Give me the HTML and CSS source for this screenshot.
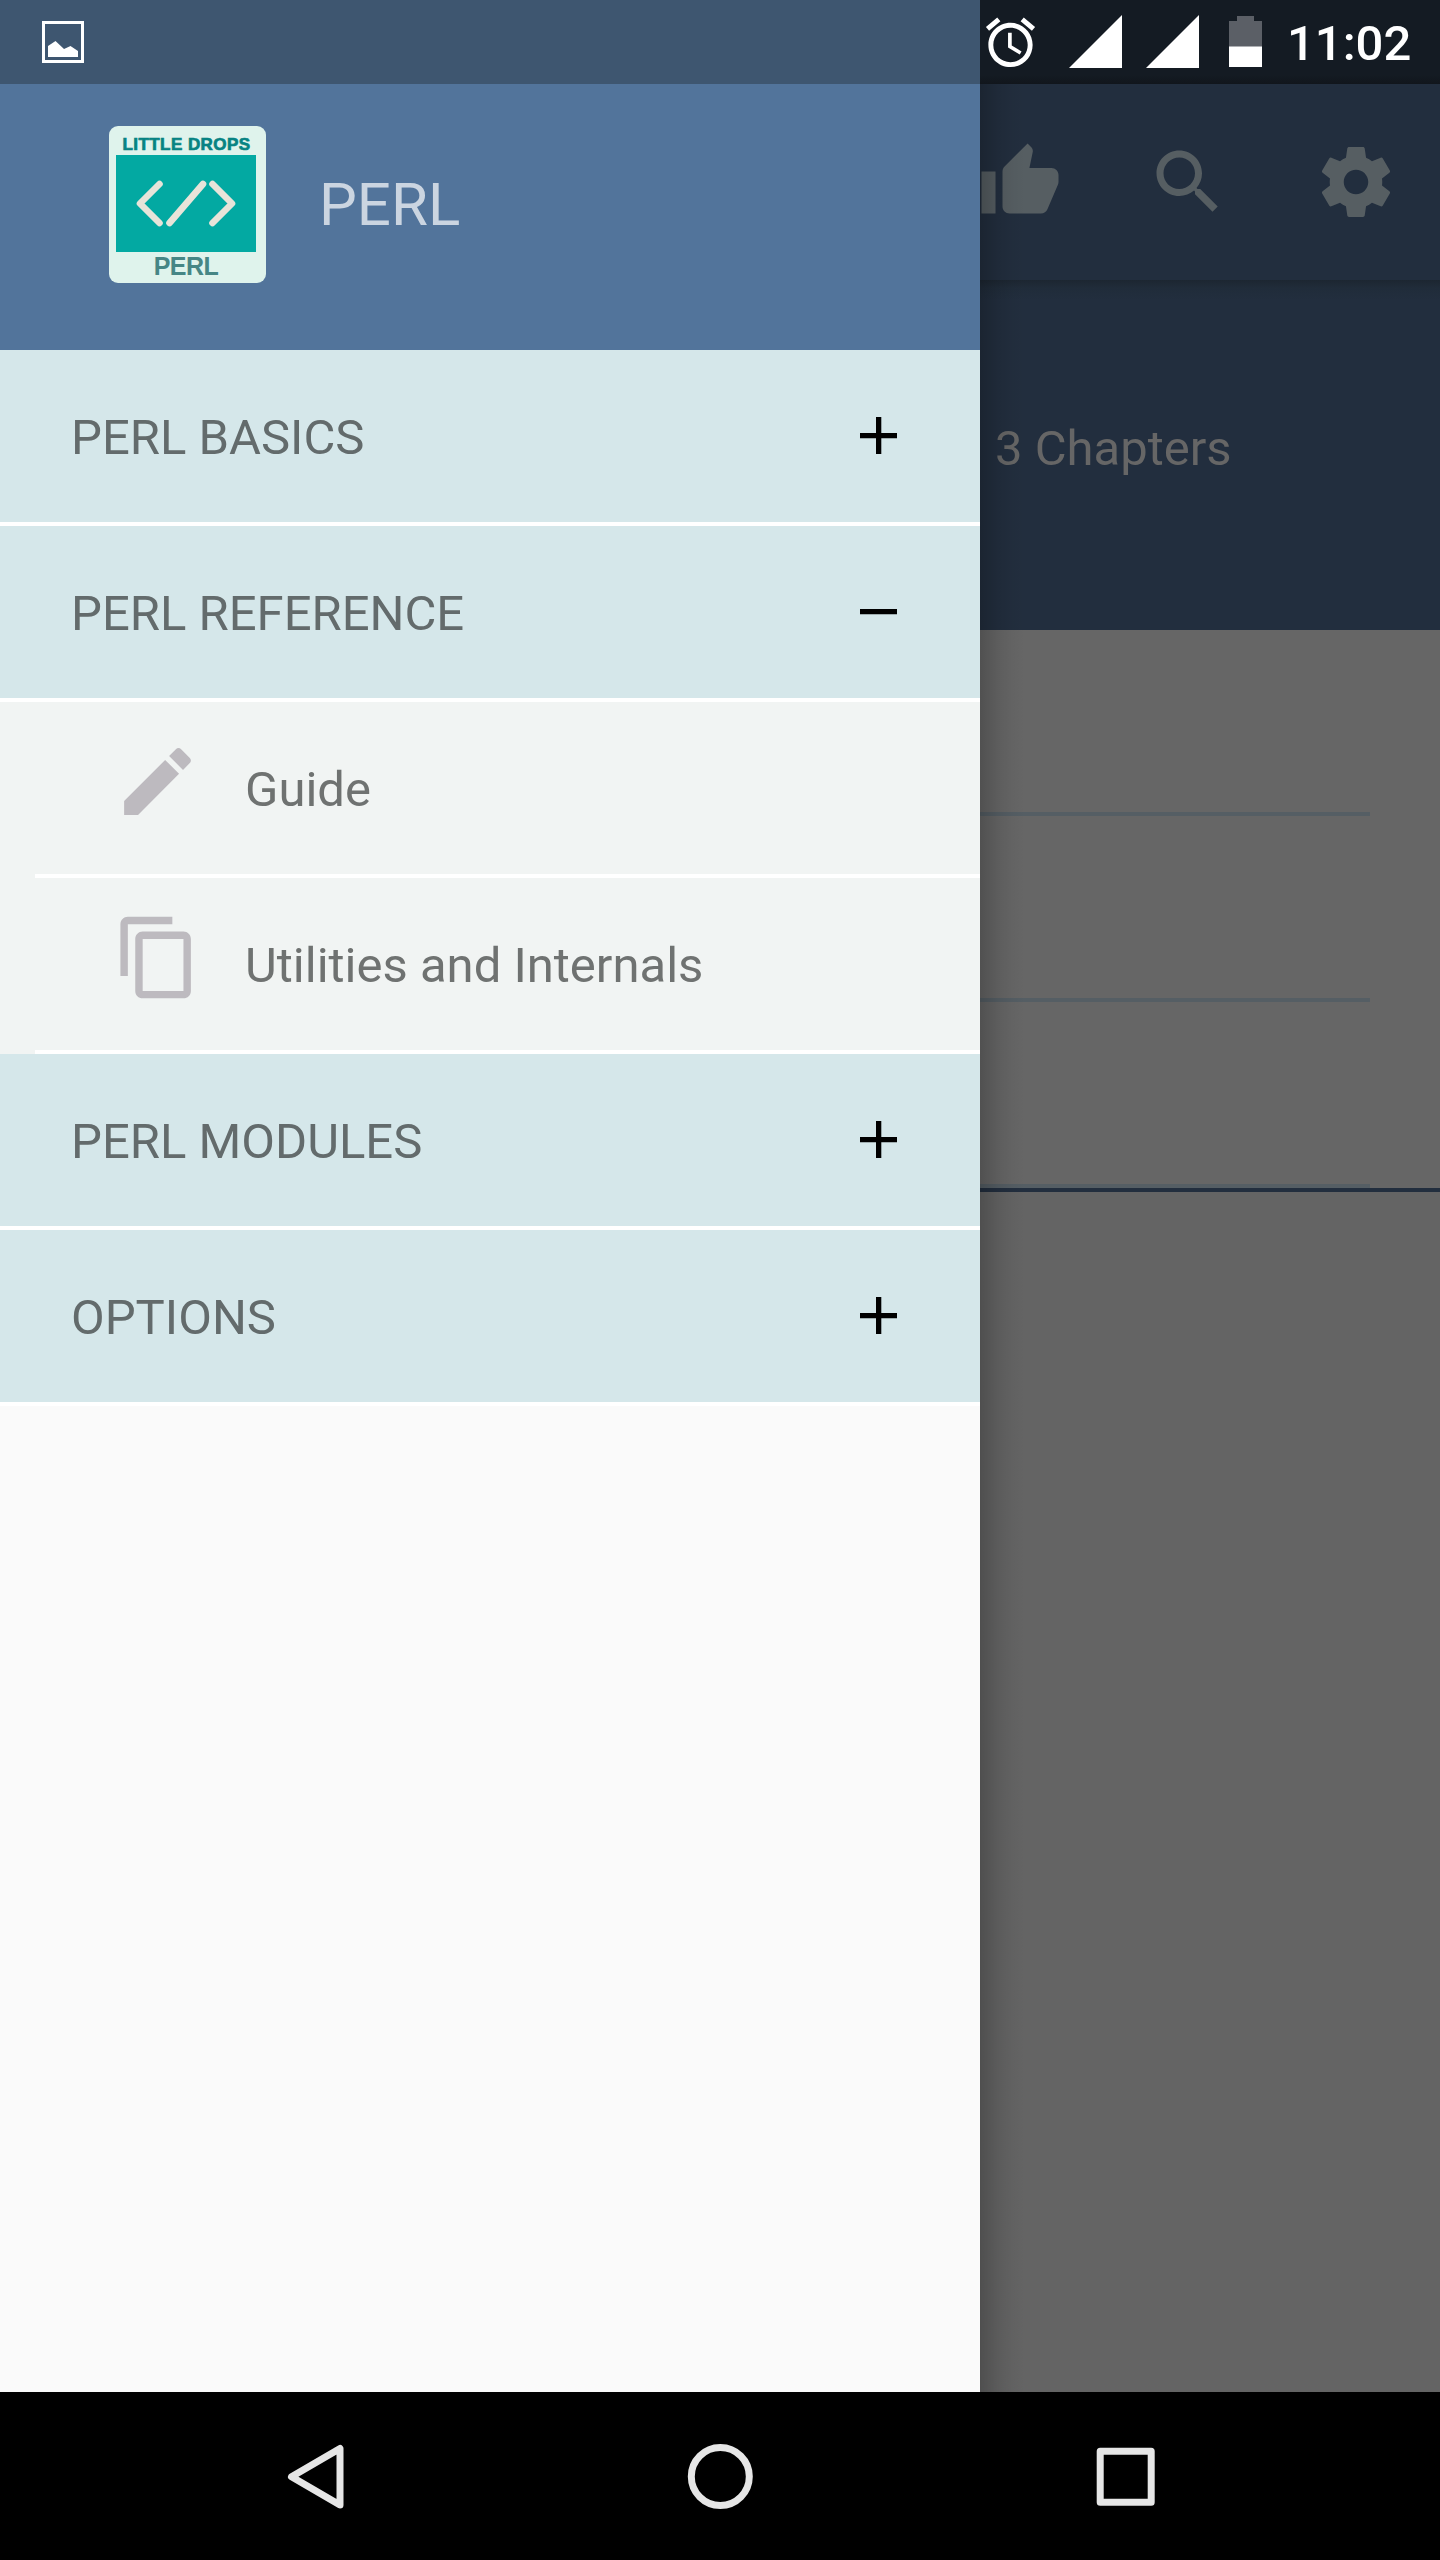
FILE: index.html
```
<!DOCTYPE html>
<html lang="en">
<head>
    <meta charset="UTF-8">
    <meta name="viewport" content="width=device-width, initial-scale=1.0">
    <title>PERL</title>
    <link rel="stylesheet" href="styles.css">
</head>
<body>
    <header class="status-bar">
        <div class="status-left">
            <svg class="picture-icon" viewBox="0 0 42 42">
                <rect x="1.5" y="1.5" width="39" height="39" fill="none" stroke="#fff" stroke-width="3"/>
                <path d="M6 36V25l7.5-5L22 28l6.500-3L36 30v6z" fill="#fff"/>
            </svg>
        </div>
        <div class="status-right">
            <svg class="alarm-icon" viewBox="0 0 24 24" fill="#fff">
                <path d="M22 5.720l-4.600-3.860-1.290 1.530 4.600 3.860L22 5.720zM7.880 3.390L6.600 1.860 2 5.710l1.290 1.530 4.590-3.850zM12.500 8H11v6l4.750 2.850.75-1.230-4-2.370V8zM12 4c-4.970 0-9 4.030-9 9s4.020 9 9 9c4.970 0 9-4.030 9-9s-4.030-9-9-9zm0 16c-3.870 0-7-3.130-7-7s3.130-7 7-7 7 3.130 7 7-3.130 7-7 7z"/>
            </svg>
            <svg class="signal-icon" viewBox="0 0 53 53"><path d="M53 0v53H0z" fill="#fff"/></svg>
            <svg class="signal-icon" viewBox="0 0 53 53"><path d="M53 0v53H0z" fill="#fff"/></svg>
            <svg class="battery-icon" viewBox="0 0 33 51">
                <path d="M8 0h17v5h8v26H0V5h8z" fill="#5b5f66"/>
                <path d="M0 30.500h33V51H0z" fill="#fff"/>
            </svg>
            <span class="clock">11:02</span>
        </div>
    </header>

    <div class="screen">
        <nav class="drawer">
            <div class="drawer-header">
                <div class="logo">
                    <span class="logo-top">LITTLE DROPS</span>
                    <svg class="logo-code" viewBox="0 0 140 97" fill="none" stroke="#e8e4d9" stroke-width="6.600" stroke-linecap="round" stroke-linejoin="round">
                        <path d="M43.500 29L24 48.500 43.500 68M53.500 68L87 29M96.500 29L116 48.500 96.500 68"/>
                    </svg>
                    <span class="logo-bottom">PERL</span>
                </div>
                <h1>PERL</h1>
            </div>

            <div class="group">
                <span>PERL BASICS</span>
                <svg class="toggle" viewBox="0 0 37 37"><path d="M0 16h37v5.300H0zM16 0h5.300v37H16z"/></svg>
            </div>
            <div class="group">
                <span>PERL REFERENCE</span>
                <svg class="toggle" viewBox="0 0 37 37"><path d="M0 16h37v5.300H0z"/></svg>
            </div>
            <ul class="items">
                <li>
                    <svg class="item-icon" viewBox="0 0 24 24"><path d="M3 17.250V21h3.750L17.810 9.940l-3.750-3.750L3 17.250zM20.710 7.040c.39-.39.39-1.020 0-1.410l-2.340-2.340c-.39-.39-1.020-.39-1.410 0l-1.830 1.830 3.750 3.750 1.830-1.830z"/></svg>
                    <span>Guide</span>
                </li>
                <li>
                    <svg class="item-icon" viewBox="0 0 24 24"><path d="M16 1H4c-1.100 0-2 .9-2 2v14h2V3h12V1zm3 4H8c-1.100 0-2 .9-2 2v14c0 1.100.9 2 2 2h11c1.100 0 2-.9 2-2V7c0-1.100-.9-2-2-2zm0 16H8V7h11v14z"/></svg>
                    <span>Utilities and Internals</span>
                </li>
            </ul>
            <div class="group">
                <span>PERL MODULES</span>
                <svg class="toggle" viewBox="0 0 37 37"><path d="M0 16h37v5.300H0zM16 0h5.300v37H16z"/></svg>
            </div>
            <div class="group">
                <span>OPTIONS</span>
                <svg class="toggle" viewBox="0 0 37 37"><path d="M0 16h37v5.300H0zM16 0h5.300v37H16z"/></svg>
            </div>
        </nav>

        <main class="page">
            <div class="app-bar">
                <svg viewBox="0 0 24 24"><path d="M1 21h4V9H1v12zm22-11c0-1.100-.9-2-2-2h-6.310l.95-4.570.03-.32c0-.41-.17-.79-.44-1.060L14.170 1 7.590 7.590C7.220 7.950 7 8.450 7 9v10c0 1.100.9 2 2 2h9c.83 0 1.540-.5 1.840-1.220l3.020-7.050c.09-.23.14-.47.14-.73v-2z"/></svg>
                <svg viewBox="0 0 24 24"><path d="M15.500 14h-.79l-.28-.27C15.410 12.590 16 11.110 16 9.500 16 5.910 13.090 3 9.500 3S3 5.910 3 9.500 5.910 16 9.500 16c1.610 0 3.090-.59 4.230-1.570l.27.28v.79l5 4.990L20.490 19l-4.990-5zm-6 0C7.010 14 5 11.990 5 9.500S7.010 5 9.500 5 14 7.010 14 9.500 11.990 14 9.500 14z"/></svg>
                <svg viewBox="0 0 24 24"><path d="M19.430 12.980c.04-.32.07-.64.07-.98s-.03-.66-.07-.98l2.110-1.650c.19-.15.24-.42.12-.64l-2-3.460c-.12-.22-.39-.3-.61-.22l-2.490 1c-.52-.4-1.080-.73-1.690-.98l-.38-2.650C14.460 2.180 14.250 2 14 2h-4c-.25 0-.46.18-.49.42l-.38 2.650c-.61.25-1.170.59-1.690.98l-2.490-1c-.23-.09-.49 0-.61.22l-2 3.460c-.13.22-.07.49.12.64l2.110 1.650c-.04.32-.07.65-.07.98s.03.66.07.98l-2.110 1.650c-.19.15-.24.42-.12.64l2 3.460c.12.22.39.3.61.22l2.490-1c.52.4 1.080.73 1.690.98l.38 2.650c.03.24.24.42.49.42h4c.25 0 .46-.18.49-.42l.38-2.650c.61-.25 1.170-.59 1.690-.98l2.490 1c.23.09.49 0 .61-.22l2-3.460c.12-.22.07-.49-.12-.64l-2.110-1.650zM12 15.500c-1.930 0-3.500-1.570-3.500-3.500s1.570-3.500 3.500-3.500 3.500 1.570 3.500 3.500-1.570 3.500-3.500 3.500z"/></svg>
            </div>
            <div class="hero">3 Chapters</div>
            <div class="chapters">
                <div class="chapter"></div>
                <div class="chapter"></div>
                <div class="chapter"></div>
            </div>
        </main>
    </div>

    <footer class="nav-bar">
        <svg viewBox="0 0 66 66"><path d="M58 5.500v56.500L9.500 33.700z"/></svg>
        <svg viewBox="0 0 66 66"><circle cx="33.300" cy="33.500" r="29"/></svg>
        <svg viewBox="0 0 66 66"><rect x="8.200" y="8.200" width="51" height="51"/></svg>
    </footer>
</body>
</html>
```
FILE: styles.css
```
* {
    box-sizing: border-box;
}
body {
    margin: 0;
    width: 1440px;
    height: 2560px;
    display: flex;
    flex-direction: column;
    overflow: hidden;
    font-family: Roboto, sans-serif;
    font-size: 49px;
    background-color: #000;
}
svg {
    display: block;
    flex: none;
}

/* status bar */
.status-bar {
    display: flex;
    height: 84px;
}
.status-left {
    width: 980px;
    padding: 21px 42px;
    background-color: #3e5670;
}
.picture-icon {
    width: 42px;
    height: 42px;
}
.status-right {
    flex: 1;
    display: flex;
    align-items: flex-start;
    background: linear-gradient(#141b23 75px, #11161c);
}
.alarm-icon {
    width: 59px;
    height: 59px;
    margin: 13px 0 0 1px;
}
.signal-icon {
    width: 53px;
    height: 53px;
    margin: 15px 0 0 29px;
}
.signal-icon + .signal-icon {
    margin-left: 24px;
}
.battery-icon {
    width: 33px;
    height: 51px;
    margin: 16px 0 0 30px;
}
.clock {
    margin: 15px 0 0 25px;
    font-size: 49px;
    font-weight: 500;
    line-height: 58px;
    color: #fff;
}

.screen {
    flex: 1;
    display: flex;
    min-height: 0;
}

/* drawer */
.drawer {
    width: 980px;
    background-color: #fafafa;
}
.drawer-header {
    height: 266px;
    display: flex;
    align-items: flex-start;
    padding: 42px 0 0 109px;
    background-color: #52749b;
}
.logo {
    width: 157px;
    height: 157px;
    display: flex;
    flex-direction: column;
    align-items: center;
    border-radius: 9px;
    background-color: #dff3ec;
    font-family: "Liberation Sans", Arial, sans-serif;
    font-weight: bold;
    white-space: nowrap;
}
.logo-top {
    height: 29px;
    padding-top: 9px;
    margin-right: 2px;
    font-size: 17px;
    line-height: 19px;
    letter-spacing: 0.45px;
    color: #078383;
    -webkit-text-stroke: 0.7px #078383;
}
.logo-code {
    width: 140px;
    height: 97px;
    margin-right: 3px;
    background-color: #03a9a2;
}
.logo-bottom {
    margin-right: 3px;
    font-size: 25px;
    line-height: 28px;
    letter-spacing: -0.5px;
    color: #468685;
}
.drawer-header h1 {
    margin: 43px 0 0 53px;
    font-size: 60px;
    font-weight: 400;
    line-height: 72px;
    color: #cbd5e1;
}
.group {
    height: 176px;
    display: flex;
    justify-content: space-between;
    align-items: center;
    padding: 0 83px 0 71px;
    border-bottom: 4px solid #fff;
    background-color: #d5e7ea;
    color: #636b6c;
}
.group span,
.items span {
    padding-top: 3px;
}
.toggle {
    width: 37px;
    height: 37px;
    margin-bottom: 2px;
}
.items {
    margin: 0;
    padding: 0 0 0 35px;
    list-style: none;
    background-color: #f1f4f3;
    color: #6f7271;
}
.items li {
    height: 176px;
    display: flex;
    align-items: center;
    padding-left: 78px;
    border-bottom: 4px solid #fff;
}
.item-icon {
    width: 89px;
    height: 89px;
    margin: 0 43px 14px 0;
    fill: #bdbabf;
}

/* page behind the drawer */
.page {
    position: relative;
    flex: 1;
    background-color: #646464;
}
.page::after {
    content: "";
    position: absolute;
    top: 0;
    left: 0;
    bottom: 0;
    width: 45px;
    background: linear-gradient(to right, rgba(0, 0, 0, 0.21), rgba(0, 0, 0, 0.09) 18px, rgba(0, 0, 0, 0.03) 32px, transparent);
}
.app-bar {
    height: 196px;
    display: flex;
    gap: 84px;
    padding-top: 56px;
    background-color: #222e3e;
}
.app-bar svg {
    width: 84px;
    height: 84px;
    fill: #565e62;
}
.app-bar svg:first-child {
    margin-left: -2px;
}
.hero {
    height: 350px;
    padding: 139px 0 0 15px;
    line-height: 59px;
    color: #666;
    background: linear-gradient(#1c2631, #202c3a 8px, #222e3e 20px);
}
.chapters {
    border-bottom: 4px solid #222e3e;
    background-color: #666;
}
.chapter {
    height: 186px;
    margin-right: 70px;
    border-bottom: 4px solid #555e64;
}

/* navigation bar */
.nav-bar {
    height: 168px;
    display: flex;
    justify-content: center;
    align-items: center;
    gap: 339px;
}
.nav-bar svg {
    width: 66px;
    height: 66px;
    fill: none;
    stroke: #e6e6e6;
    stroke-width: 7;
    stroke-linejoin: round;
}
```
